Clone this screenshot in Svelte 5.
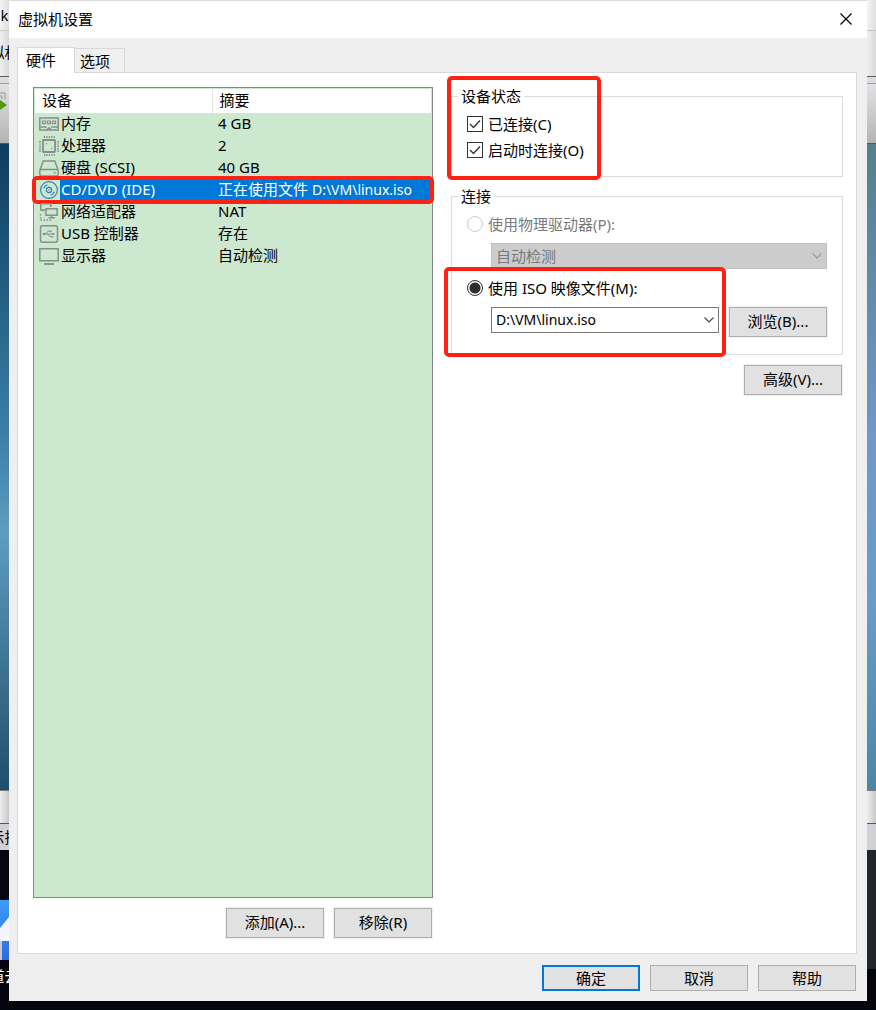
<script>
	let devices = [
		{ icon: 'memory', name: '内存', summary: '4 GB' },
		{ icon: 'cpu', name: '处理器', summary: '2' },
		{ icon: 'disk', name: '硬盘 (SCSI)', summary: '40 GB' },
		{ icon: 'cd', name: 'CD/DVD (IDE)', summary: '正在使用文件 ', path: 'D:\\VM\\linux.iso' },
		{ icon: 'network', name: '网络适配器', summary: 'NAT' },
		{ icon: 'usb', name: 'USB 控制器', summary: '存在' },
		{ icon: 'display', name: '显示器', summary: '自动检测' }
	];

	let selected = $state('cd');
	let connected = $state(true);
	let connectAtPowerOn = $state(true);
	let source = $state('iso');
</script>

{#snippet chevron()}
	<svg class="chevron" viewBox="0 0 10 6" width="10" height="6">
		<path d="M0.5 0.5 L5 5 L9.5 0.5" fill="none" stroke="currentColor" stroke-width="1.1" />
	</svg>
{/snippet}

{#snippet deviceIcon(name)}
	<svg class="icon" class:blue={name === 'cd'} viewBox="0 0 20 20" width="20" height="20">
		{#if name === 'memory'}
			<path d="M0.8 4h18.4v12H0.8z M0.8 13h7 M12.2 13h7 M7.5 16l2.5-2.2 2.5 2.2" />
			<path d="M3.5 7h3v2.6h-3z M8.5 7h3v2.6h-3z M13.5 7h3v2.6h-3z" stroke-width="1.2" />
		{:else if name === 'cpu'}
			<rect x="4" y="4" width="12" height="12" rx="0.5" stroke-width="1.8" />
			<path d="M5 1h11 M5 19h11" stroke-width="2" stroke-dasharray="1.2 1.2" />
			<path d="M1 5v11 M19 5v11" stroke-width="2" stroke-dasharray="1.2 1.2" />
			<path d="M7 7.6h1.2 M12 12.4h1.2" stroke-width="1.2" />
		{:else if name === 'disk'}
			<path d="M1 12 L4.2 3h11.6l3.2 9" />
			<path d="M2.5 11.5h15q1.7 0 1.7 1.7v3.1q0 1.7-1.7 1.7h-15q-1.7 0-1.7-1.7v-3.1q0-1.7 1.7-1.7z M14.5 14.8h2" />
		{:else if name === 'cd'}
			<circle cx="10" cy="10" r="8.4" />
			<circle cx="10" cy="10" r="2.6" />
			<circle class="dot" cx="10" cy="10" r="0.7" />
			<path d="M4.8 8.2a5.5 5.5 0 0 1 3.4-3.4 M15.2 11.8a5.5 5.5 0 0 1-3.4 3.4" />
		{:else if name === 'network'}
			<path d="M6 8H1.8V1.8h10V5" />
			<path d="M7 6.7h11.2v6.6H7z M12.6 13.3v2.2 M9.5 15.8h6.3" />
			<path d="M4 8v3 M1.5 12v6h10v-1.5" stroke-dasharray="1.5 1.5" />
		{:else if name === 'usb'}
			<rect x="1.5" y="1.8" width="17" height="16.4" rx="2" />
			<path d="M5 10h9 M6.5 10l2.5-2.8h2 M8.5 10l2.5 2.8h1.5" stroke-width="1" />
			<path class="dot" d="M13.5 8.4l2.8 1.6-2.8 1.6z M11 6.4h1.6v1.6H11z M12.4 12h1.6v1.6h-1.6z" />
			<circle class="dot" cx="5" cy="10" r="1.3" />
		{:else}
			<path d="M0.8 2.8h18.4v12H0.8z" />
			<path d="M5 18h10" stroke-width="1.8" />
		{/if}
	</svg>
{/snippet}

<div class="desktop">
	<!-- slivers of the windows behind the dialog -->
	<div class="strip left" aria-hidden="true">
		<div class="caption">k</div>
		<div class="menu">拟机</div>
		<div class="gap"></div>
		<div class="tools">
			<svg viewBox="0 0 9 20" width="9" height="20">
				<path d="M0 2h5v6 M0 5h2v3" fill="none" stroke="#999" />
				<path d="M0 9l7 5-7 5z" fill="#4e9a06" />
			</svg>
		</div>
		<div class="guest"></div>
		<div class="status"></div>
		<div class="hint">示推</div>
		<div class="night"></div>
		<div class="shortcut">
			<svg viewBox="0 0 9 60" width="9" height="60">
				<path d="M0 28L9 17v24H0z" fill="#f2f5fb" />
				<path d="M0 41h2v19H0z" fill="#c5c9d4" />
			</svg>
		</div>
		<div class="label">道云</div>
	</div>
	<div class="strip right" aria-hidden="true">
		<div class="caption"></div>
		<div class="menu"></div>
		<div class="gap"></div>
		<div class="tools"></div>
		<div class="guest"></div>
		<div class="status"></div>
		<div class="hint"></div>
		<div class="night"></div>
	</div>

	<div class="dialog" role="dialog" aria-labelledby="title">
		<header>
			<h1 id="title">虚拟机设置</h1>
			<button class="close" aria-label="关闭">
				<svg viewBox="0 0 12 12" width="12" height="12">
					<path d="M0.5 0.5l11 11M11.5 0.5l-11 11" stroke="#000" stroke-width="1.2" />
				</svg>
			</button>
		</header>

		<div class="tabs" role="tablist">
			<button class="tab active" role="tab" aria-selected="true">硬件</button>
			<button class="tab" role="tab" aria-selected="false">选项</button>
		</div>

		<main class="panel">
			<section class="hardware">
				<div class="list">
					<table>
						<thead>
							<tr><th class="device">设备</th><th>摘要</th></tr>
						</thead>
						<tbody>
							{#each devices as device}
								<tr class:selected={selected === device.icon} onclick={() => (selected = device.icon)}>
									<td class="device">
										<div class="cell">
											{@render deviceIcon(device.icon)}
											<span class="name">{device.name}</span>
										</div>
									</td>
									<td class="summary">
										{device.summary}
										{#if device.path}
											<span class="path">{device.path}</span>
											<div class="mark mark-row"></div>
										{/if}
									</td>
								</tr>
							{/each}
						</tbody>
					</table>
				</div>
				<div class="buttons">
					<button class="btn">添加(A)...</button>
					<button class="btn">移除(R)</button>
				</div>
			</section>

			<section class="settings">
				<div class="group">
					<fieldset class="state">
						<legend>设备状态</legend>
						<label class="option"><input type="checkbox" bind:checked={connected} />已连接(C)</label>
						<label class="option"><input type="checkbox" bind:checked={connectAtPowerOn} />启动时连接(O)</label>
					</fieldset>
					<div class="mark mark-state"></div>
				</div>

				<div class="group">
					<fieldset class="connection">
						<legend>连接</legend>
						<label class="option disabled">
							<input type="radio" name="source" value="drive" bind:group={source} disabled />使用物理驱动器(P):
						</label>
						<div class="field">
							<div class="combo off">
								<select aria-label="物理驱动器" disabled><option>自动检测</option></select>
								{@render chevron()}
							</div>
						</div>
						<label class="option">
							<input type="radio" name="source" value="iso" bind:group={source} />使用 ISO 映像文件(M):
						</label>
						<div class="field">
							<div class="combo">
								<select class="path" aria-label="ISO 映像文件"><option>D:\VM\linux.iso</option></select>
								{@render chevron()}
							</div>
							<button class="btn">浏览(B)...</button>
						</div>
					</fieldset>
					<div class="mark mark-iso"></div>
				</div>

				<div class="buttons">
					<button class="btn">高级(V)...</button>
				</div>
			</section>
		</main>

		<footer class="buttons">
			<button class="btn small primary">确定</button>
			<button class="btn small">取消</button>
			<button class="btn small">帮助</button>
		</footer>
	</div>
</div>

<style>
	:global(body) {
		background: #03040c;
	}

	.desktop {
		position: relative;
		box-sizing: border-box;
		min-height: 100vh;
		padding: 1px 9px 9px;
		display: flex;
		background: linear-gradient(#dcdcdc 0, #dcdcdc 1px, #04050e 1px);
		overflow: hidden;
		font: 15px/20px "Noto Sans", "Noto Sans CJK SC", sans-serif;
		color: #000;
	}

	button,
	select,
	input {
		font: inherit;
		color: inherit;
		margin: 0;
	}

	/* Background windows */
	.strip {
		position: absolute;
		top: 0;
		bottom: 0;
		width: 9px;
		display: flex;
		flex-direction: column;
	}

	.strip > div {
		flex: none;
		box-sizing: border-box;
		display: flex;
		align-items: center;
		justify-content: center;
		overflow: hidden;
		white-space: nowrap;
	}

	.left {
		left: 0;
	}

	.right {
		right: 0;
	}

	.strip .caption {
		height: 31px;
		background: linear-gradient(90deg, #f4f4f4, #dedede);
		border-bottom: 1px solid #c4c4c4;
	}

	.strip .menu {
		height: 46px;
		padding-bottom: 4px;
		background: linear-gradient(90deg, #f0f0f0, #d8d8d8);
		border-bottom: 1px solid #5c5c5c;
	}

	.strip .gap {
		height: 7px;
		background: #dcdcdc;
		border-bottom: 1px solid #9c9ca4;
	}

	.strip .tools {
		height: 60px;
		padding-bottom: 26px;
		background: linear-gradient(#e2e2e6, #b4b4b4);
		border-bottom: 1px solid #555;
	}

	.strip .guest {
		height: 646px;
		background: linear-gradient(#0c3d5e, #3d7fa6 45%, #5f9cc0 60%, #1f4f68);
	}

	.right .guest {
		background: linear-gradient(#53808c, #7098c8 45%, #6a9cc8 70%, #4d86a6);
	}

	.strip .status {
		height: 34px;
		background: linear-gradient(90deg, #ececec, #c8c8c8);
		border-top: 1px solid #777;
		border-bottom: 1px solid #555;
	}

	.strip .hint {
		height: 26px;
		background: #cfd1d6;
	}

	.strip .night {
		height: 50px;
		background: #05060f;
	}

	.right .night {
		height: 119px;
		background: #23252e;
	}

	.strip .shortcut {
		height: 60px;
		background: linear-gradient(#3d9bf5, #2f6be0);
	}

	.strip .label {
		height: 32px;
		color: #fff;
	}

	/* Dialog */
	.dialog {
		position: relative;
		flex: 1;
		min-width: 0;
		display: flex;
		flex-direction: column;
		background: #efefef;
	}

	header {
		box-sizing: border-box;
		display: flex;
		align-items: center;
		justify-content: space-between;
		height: 37px;
		padding: 0 9px 2px;
		background: #fff;
	}

	h1 {
		margin: 0;
		font-size: 15px;
		font-weight: 400;
	}

	.close {
		display: flex;
		padding: 6px;
		border: 0;
		background: none;
	}

	.tabs {
		display: flex;
		align-items: flex-end;
		padding: 9px 8px 0;
	}

	.tab {
		height: 24px;
		padding: 0 14px 0 5px;
		border: 1px solid #d9d9d9;
		border-left: 0;
		border-bottom: 0;
		background: #f0f0f0;
	}

	.tab.active {
		position: relative;
		height: 26px;
		margin-bottom: -1px;
		padding: 0 18px 2px 8px;
		border-left: 1px solid #d9d9d9;
		background: #fff;
	}

	.panel {
		flex: 1;
		display: grid;
		grid-template-columns: minmax(0, 400fr) minmax(0, 392fr);
		gap: 18px;
		margin: 0 10px 0 8px;
		padding: 14px 13px 15px 15px;
		border: 1px solid #d9d9d9;
		background: #fff;
	}

	.hardware,
	.settings {
		display: flex;
		flex-direction: column;
		gap: 10px;
	}

	/* Device list */
	.list {
		flex: 1;
		padding: 1px;
		border: 1px solid #828790;
		background: #cce8cf;
	}

	table {
		width: 100%;
		table-layout: fixed;
		border-collapse: collapse;
	}

	th {
		box-sizing: border-box;
		height: 24px;
		padding: 0 7px 2px;
		background: #fff;
		font-weight: 400;
		text-align: left;
	}

	th.device {
		width: 177px;
		border-right: 1px solid #e5e5e5;
	}

	tbody tr {
		position: relative;
	}

	td {
		height: 22px;
		padding: 0;
		line-height: 20px;
		white-space: nowrap;
	}

	td.summary {
		box-sizing: border-box;
		padding: 0 0 2px 6px;
	}

	.cell {
		display: flex;
		align-items: center;
		padding-left: 4px;
	}

	.name {
		flex: 1;
		margin-left: 1px;
		padding: 0 0 2px 1px;
	}

	.selected .name,
	.selected .summary {
		background: #0078d7;
		color: #fff;
	}

	.path {
		font-size: 14px;
		line-height: 16px;
	}

	.icon {
		flex: none;
		fill: none;
		stroke: #858f88;
		stroke-width: 1.5;
	}

	.icon.blue {
		stroke: #2f7bb5;
		stroke-width: 1.1;
	}

	.icon .dot {
		fill: #858f88;
		stroke: none;
	}

	.icon.blue .dot {
		fill: #2f7bb5;
	}

	/* Buttons */
	.buttons {
		display: flex;
		justify-content: flex-end;
		gap: 10px;
		padding-right: 1px;
	}

	.btn {
		flex: none;
		box-sizing: border-box;
		width: 98px;
		height: 30px;
		padding: 0 0 2px;
		border: 1px solid #adadad;
		background: #e1e1e1;
		box-shadow: 0 0 0 1px #f0f0f0;
	}

	.btn.small {
		height: 26px;
		padding: 0;
		box-shadow: none;
	}

	.btn.primary {
		border: 2px solid #0078d7;
	}

	footer.buttons {
		padding: 11px 11px 10px;
	}

	/* Settings */
	.group {
		position: relative;
	}

	fieldset {
		min-width: 0;
		margin: 0;
		padding: 0;
		border: 1px solid #dcdcdc;
	}

	legend {
		margin-left: 6px;
		padding: 0 3px;
		line-height: 18px;
	}

	.state {
		padding: 6px 0 13px;
	}

	.connection {
		padding: 6px 0 17px;
	}

	.option {
		display: flex;
		align-items: center;
		gap: 5px;
		height: 26px;
		padding-left: 15px;
	}

	.option.disabled {
		color: #7a7a7a;
	}

	input {
		appearance: none;
		box-sizing: border-box;
		width: 16px;
		height: 16px;
		border: 1px solid #333;
		background: #fff;
	}

	input[type='checkbox']:checked {
		background: url("data:image/svg+xml,%3Csvg xmlns='http://www.w3.org/2000/svg' viewBox='0 0 14 14'%3E%3Cpath d='M2 7l3.5 3.5L12 3.5' fill='none' stroke='%23333' stroke-width='1.4'/%3E%3C/svg%3E");
	}

	input[type='radio'] {
		border-radius: 50%;
	}

	input[type='radio']:checked {
		background: radial-gradient(circle, #2b2f33 5px, #fff 6px);
	}

	input:disabled {
		border-color: #ccc;
	}

	.field {
		display: flex;
		align-items: flex-start;
		gap: 10px;
		margin: 6px 15px 6px 39px;
	}

	.field:last-child {
		margin-bottom: 0;
	}

	.combo {
		position: relative;
		flex: 1;
		min-width: 0;
	}

	select {
		display: block;
		box-sizing: border-box;
		appearance: none;
		width: 100%;
		height: 26px;
		padding: 0 20px 1px 4px;
		border: 1px solid #7a7a7a;
		border-radius: 0;
		background: #fff;
	}

	select.path {
		font-size: 14px;
	}

	.off select {
		border-color: #bfbfbf;
		background: #ccc;
		color: #787878;
		opacity: 1;
	}

	.chevron {
		position: absolute;
		top: 10px;
		right: 5px;
		color: #444;
		pointer-events: none;
	}

	.off .chevron {
		color: #999;
	}

	/* Red highlight frames */
	.mark {
		position: absolute;
		box-sizing: border-box;
		border: 4px solid #ff2112;
		border-radius: 5px;
		pointer-events: none;
	}

	.mark-row {
		inset: -3px;
	}

	.mark-state {
		top: -11px;
		bottom: -3px;
		left: -4px;
		width: 154px;
	}

	.mark-iso {
		bottom: -2px;
		left: -7px;
		width: 282px;
		height: 90px;
	}
</style>
